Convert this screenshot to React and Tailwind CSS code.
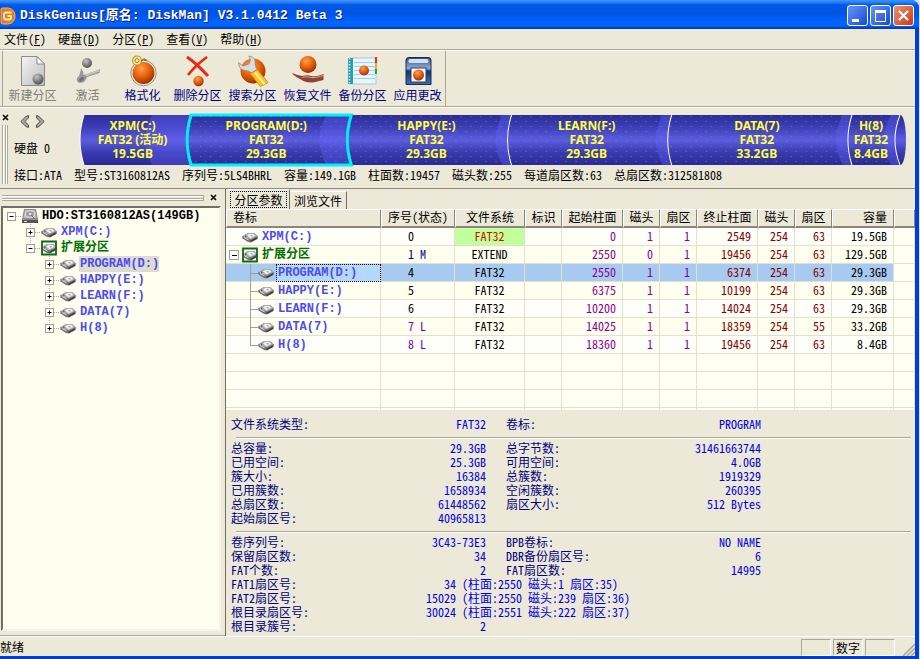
import { useState } from "react";

const menus = [
  { label: "文件", hotkey: "F" },
  { label: "硬盘", hotkey: "D" },
  { label: "分区", hotkey: "P" },
  { label: "查看", hotkey: "V" },
  { label: "帮助", hotkey: "H" },
];

const segments = [
  { name: "XPM(C:)", fs: "FAT32 (活动)", size: "19.5GB", x: 0, width: 107 },
  { name: "PROGRAM(D:)", fs: "FAT32", size: "29.3GB", x: 107, width: 160 },
  { name: "HAPPY(E:)", fs: "FAT32", size: "29.3GB", x: 267, width: 160 },
  { name: "LEARN(F:)", fs: "FAT32", size: "29.3GB", x: 427, width: 160 },
  { name: "DATA(7)", fs: "FAT32", size: "33.2GB", x: 587, width: 180 },
  { name: "H(8)", fs: "FAT32", size: "8.4GB", x: 767, width: 48 },
];

const diskInfo = [
  "接口:ATA",
  "型号:ST3160812AS",
  "序列号:5LS4BHRL",
  "容量:149.1GB",
  "柱面数:19457",
  "磁头数:255",
  "每道扇区数:63",
  "总扇区数:312581808",
];

const tree = [
  { name: "HDO:ST3160812AS(149GB)", level: 0, open: true, kind: "disk" },
  { name: "XPM(C:)", level: 1, open: false, kind: "drive" },
  { name: "扩展分区", level: 1, open: true, kind: "extend", last: true },
  { name: "PROGRAM(D:)", level: 2, open: false, kind: "drive" },
  { name: "HAPPY(E:)", level: 2, open: false, kind: "drive" },
  { name: "LEARN(F:)", level: 2, open: false, kind: "drive" },
  { name: "DATA(7)", level: 2, open: false, kind: "drive" },
  { name: "H(8)", level: 2, open: false, kind: "drive", last: true },
];

const columns = [
  { label: "卷标", col: "w-[155px]", head: "text-left pl-1.5" },
  { label: "序号(状态)", col: "w-[74px]", head: "text-center" },
  { label: "文件系统", col: "w-[70px]", head: "text-center" },
  { label: "标识", col: "w-[37px]", head: "text-center" },
  { label: "起始柱面", col: "w-[61px]", head: "text-center" },
  { label: "磁头", col: "w-[37px]", head: "text-center" },
  { label: "扇区", col: "w-[37px]", head: "text-center" },
  { label: "终止柱面", col: "w-[61px]", head: "text-center" },
  { label: "磁头", col: "w-[37px]", head: "text-center" },
  { label: "扇区", col: "w-[37px]", head: "text-center" },
  { label: "容量", col: "w-[62px]", head: "text-right pr-1.5" },
  { label: "", col: "", head: "" },
];

const rows = [
  { name: "XPM(C:)", no: "0", fs: "FAT32", start: ["0", "1", "1"], end: ["2549", "254", "63"], size: "19.5GB", active: true },
  { name: "扩展分区", no: "1 M", noColor: "text-[#000090]", fs: "EXTEND", start: ["2550", "0", "1"], end: ["19456", "254", "63"], size: "129.5GB", extend: true },
  { name: "PROGRAM(D:)", no: "4", fs: "FAT32", start: ["2550", "1", "1"], end: ["6374", "254", "63"], size: "29.3GB", child: true },
  { name: "HAPPY(E:)", no: "5", fs: "FAT32", start: ["6375", "1", "1"], end: ["10199", "254", "63"], size: "29.3GB", child: true },
  { name: "LEARN(F:)", no: "6", fs: "FAT32", start: ["10200", "1", "1"], end: ["14024", "254", "63"], size: "29.3GB", child: true },
  { name: "DATA(7)", no: "7 L", noColor: "text-[#900090]", fs: "FAT32", start: ["14025", "1", "1"], end: ["18359", "254", "55"], size: "33.2GB", child: true },
  { name: "H(8)", no: "8 L", noColor: "text-[#900090]", fs: "FAT32", start: ["18360", "1", "1"], end: ["19456", "254", "63"], size: "8.4GB", child: true, last: true },
];

const details = [
  [["文件系统类型:", "FAT32", "卷标:", "PROGRAM"]],
  [
    ["总容量:", "29.3GB", "总字节数:", "31461663744"],
    ["已用空间:", "25.3GB", "可用空间:", "4.0GB"],
    ["簇大小:", "16384", "总簇数:", "1919329"],
    ["已用簇数:", "1658934", "空闲簇数:", "260395"],
    ["总扇区数:", "61448562", "扇区大小:", "512 Bytes"],
    ["起始扇区号:", "40965813"],
  ],
  [
    ["卷序列号:", "3C43-73E3", "BPB卷标:", "NO NAME"],
    ["保留扇区数:", "34", "DBR备份扇区号:", "6"],
    ["FAT个数:", "2", "FAT扇区数:", "14995"],
  ],
];

const sectors = [
  ["FAT1扇区号:", "34", "(柱面:2550 磁头:1 扇区:35)"],
  ["FAT2扇区号:", "15029", "(柱面:2550 磁头:239 扇区:36)"],
  ["根目录扇区号:", "30024", "(柱面:2551 磁头:222 扇区:37)"],
];

/* ---------- icons ---------- */

function Logo() {
  return (
    <svg width="16" height="18" viewBox="0 0 16 18">
      <path d="M1 2 Q1 1 3 1 H8 Q15 2 15 9 Q15 16 8 17 H3 Q1 17 1 15 Z" fill="#f07818" stroke="#ffb060" />
      <path d="M11.5 5.5 H6 Q4 5.5 4 7.5 V10.5 Q4 12.5 6 12.5 H9.5 Q11 12.5 11 11 V9 H7.5" fill="none" stroke="#fff3c8" strokeWidth="1.8" />
    </svg>
  );
}

function DriveIcon({ boxed }) {
  return (
    <svg width="16" height="16" viewBox="0 0 16 16" className="shrink-0">
      {boxed && <rect x="0.500" y="1.500" width="15" height="13" fill="#fff" />}
      <path d="M0 7.500 L6 4 L12.500 4.200 L16 7.500 L15.500 10 L9 13.500 L6 13 L0.500 9.500 Z" fill="#707070" />
      <path d="M0.500 7.200 L6 4 L12.500 4.200 L15.500 7 L8.500 10.500 Z" fill="#b0b0b0" />
      <path d="M5 6.500 L8 4.800 L12 5.200 L13 7 L8.500 9.200 Z" fill="#f4f4f4" />
      <path d="M8 6.300 L10.500 6 L11 7.200 L9 7.800 Z" fill="#a8a8a8" />
      <path d="M2 8.500 L6.500 10.800" stroke="#e4e4e4" />
      <path d="M8.500 12.500 L15 9" stroke="#3a3a3a" strokeWidth="1.400" />
      <rect x="3" y="6.500" width="1.500" height="1.500" fill="#5c5c5c" />
      {boxed && <path d="M1 1.500 H15 V14.500 H1 Z" fill="none" stroke="#0c6c0c" strokeWidth="1.800" />}
    </svg>
  );
}

function DiskIcon() {
  return (
    <svg width="16" height="16" viewBox="0 0 16 16" className="shrink-0">
      <path d="M2 1 H14 L16 11 V15 H0 V11 Z" fill="#8d8d8d" />
      <path d="M3 2 H13 L14.5 10 H1.5 Z" fill="#c0c0c0" />
      <ellipse cx="8" cy="6" rx="4.5" ry="3.2" fill="#9c9c9c" stroke="#e4e4e4" />
      <ellipse cx="8" cy="6" rx="1.3" ry="1" fill="#f5f5f5" />
      <path d="M9 7 L13 11" stroke="#707070" />
      <rect x="0" y="12" width="16" height="3" fill="#555" />
      <rect x="2" y="13" width="3" height="1" fill="#ddd" />
    </svg>
  );
}

function Ball({ cx, cy, r, gray }) {
  return <circle cx={cx} cy={cy} r={r} fill={gray ? "url(#ballGray)" : "url(#ballOrange)"} />;
}

function NewIcon() {
  return (
    <>
      <path d="M4.500 1.500 H20 L27.500 9 V30.500 H4.500 Z" fill="url(#paper)" stroke="#8a8a8a" />
      <path d="M20 1.500 V9 H27.500 Z" fill="#fff" stroke="#8a8a8a" />
      <Ball cx={21} cy={24} r={5.500} gray />
    </>
  );
}

function ActivateIcon() {
  return (
    <>
      <Ball cx={15} cy={8} r={5} gray />
      <path d="M28 14 L27.500 18 L15 22 Q14 27 9 28 Q4 28 5 23 Q8 21 9 13 Q12 17 11.500 20 L14 19.500 Z" fill="#9a9a9a" />
      <path d="M6.500 25.500 Q9 28 12 24 Q12.500 22 10 22 Q7 23 6.500 25.500 Z" fill="#707070" />
      <path d="M14 20.500 L27 15.500" fill="none" stroke="#c8c8c8" strokeWidth="1.500" />
    </>
  );
}

function FormatIcon() {
  return (
    <>
      <circle cx="16.500" cy="18" r="12.700" fill="#fff2c4" stroke="#8d8d9c" />
      <Ball cx={16.5} cy={18} r={11} />
      <circle cx="10" cy="5.500" r="4.500" fill="#ffe98c" stroke="#b89828" strokeWidth="1.200" />
      <circle cx="10" cy="5.500" r="2" fill="#ece9d8" stroke="#a08030" />
      <path d="M14 6 L17 4 L20 5.500" fill="none" stroke="#907830" strokeWidth="1.500" />
    </>
  );
}

function DeleteIcon() {
  return (
    <>
      <path d="M5 2 Q14 8 26 21" fill="none" stroke="#e8280c" strokeWidth="3" />
      <path d="M25 2 Q14 10 6 20" fill="none" stroke="#e8280c" strokeWidth="2.600" />
      <Ball cx={16.5} cy={26} r={5.2} />
    </>
  );
}

function SearchIcon() {
  return (
    <>
      <Ball cx={16} cy={16} r={12.5} />
      <path d="M13 18.500 L20.500 14.500 L31 27.500 L23.500 31.500 Z" fill="#ffc020" stroke="#c88000" strokeWidth="0.800" />
      <path d="M18 17.500 L27.500 29" stroke="#fff2a0" strokeWidth="2" />
      <path d="M12 1 Q19 2 18 8.500 Q18 11 20 14.500 L14 18 Q12 15 8 15.500 Q2 14.500 1.500 7.500 L6 11 L12 9 L13.500 5 Z" fill="#dcdcdc" stroke="#8a8a8a" strokeWidth="0.800" />
    </>
  );
}

function RecoverIcon() {
  return (
    <>
      <Ball cx={16} cy={9.5} r={8.5} />
      <path d="M0.500 18 Q4 20 10 21 Q16 19.500 19 21 Q24 22 31.500 19 V25 Q26 26 21 27.500 Q13 28 9 24.500 Q4 22.500 0.500 19 Z" fill="#8e4432" />
      <path d="M10 22.500 Q15 21 19 22.500 Q25 23 31 20.500" fill="none" stroke="#d69a80" strokeWidth="1.200" />
    </>
  );
}

function BackupIcon() {
  return (
    <>
      <rect x="3" y="3" width="26" height="26" fill="#eaf6ff" stroke="#9cc8e4" />
      <path d="M7 7.500 H28 M7 11.500 H28 M7 15.500 H28 M7 19.500 H28 M7 23.500 H28" stroke="#9ed0f0" />
      <rect x="1" y="3" width="5" height="26" fill="#2c9cb4" />
      <path d="M2.500 3 V29" stroke="#d8f4ff" strokeWidth="1.500" strokeDasharray="1.500 1.500" />
      <rect x="28" y="2" width="2" height="6" fill="#d83020" />
      <rect x="28" y="8" width="2" height="6" fill="#e8b020" />
      <rect x="28" y="14" width="2" height="5" fill="#30a050" />
      <Ball cx={17} cy={15.500} r={5} />
    </>
  );
}

function ApplyIcon() {
  return (
    <>
      <path d="M4 5 Q4 2.500 7 2.500 H26 Q29 2.500 29 5 V29.500 H4 Z" fill="url(#floppy)" stroke="#1c2c50" />
      <rect x="6.500" y="4" width="20" height="4" rx="1.500" fill="#cfe0f4" />
      <rect x="9" y="13" width="15" height="14" fill="#f6f8fc" stroke="#30405c" />
      <Ball cx={16.500} cy={20} r={5.500} />
    </>
  );
}

const tools = [
  { label: "新建分区", icon: NewIcon, disabled: true },
  { label: "激活", icon: ActivateIcon, disabled: true },
  { label: "格式化", icon: FormatIcon },
  { label: "删除分区", icon: DeleteIcon },
  { label: "搜索分区", icon: SearchIcon },
  { label: "恢复文件", icon: RecoverIcon },
  { label: "备份分区", icon: BackupIcon },
  { label: "应用更改", icon: ApplyIcon },
];

function IconDefs() {
  return (
    <svg width="0" height="0" className="absolute" aria-hidden="true">
      <defs>
        <radialGradient id="ballOrange" cx="0.4" cy="0.3" r="0.8">
          <stop offset="0" stopColor="#ffa050" />
          <stop offset="0.45" stopColor="#e8640c" />
          <stop offset="0.75" stopColor="#b84008" />
          <stop offset="1" stopColor="#6c1c00" />
        </radialGradient>
        <radialGradient id="ballGray" cx="0.38" cy="0.3" r="0.75">
          <stop offset="0" stopColor="#c4c4c4" />
          <stop offset="0.5" stopColor="#888" />
          <stop offset="1" stopColor="#484848" />
        </radialGradient>
        <linearGradient id="paper" x1="0" y1="0" x2="1" y2="1">
          <stop offset="0" stopColor="#f4f4f4" />
          <stop offset="1" stopColor="#bdbdbd" />
        </linearGradient>
        <linearGradient id="floppy" x1="0" y1="0" x2="0" y2="1">
          <stop offset="0" stopColor="#35486e" />
          <stop offset="0.4" stopColor="#8cb0e0" />
          <stop offset="0.5" stopColor="#14346c" />
          <stop offset="1" stopColor="#3c70b8" />
        </linearGradient>
      </defs>
    </svg>
  );
}

/* ---------- window parts ---------- */

function TitleBar() {
  const box = "w-[21px] h-[21px] rounded-[3px] border border-white flex items-center justify-center";
  return (
    <header className="h-[29px] shrink-0 flex items-center justify-between pr-[5px] bg-[linear-gradient(#3d95ff_0,#2a82f8_2px,#0058e6_5px,#0054e3_14px,#0066ff_22px,#0062fa_26px,#0040c0_28px,#0038b0_29px)]">
      <div className="flex items-center gap-1 pt-0.5">
        <Logo />
        <h1 className="font-['Liberation_Mono','Noto_Sans_CJK_SC',monospace] text-[13px] leading-4 font-bold text-white whitespace-nowrap [text-shadow:1px_1px_0_#0a1883]">
          DiskGenius[原名: DiskMan] V3.1.0412 Beta 3
        </h1>
      </div>
      <div className="flex gap-0.5 pt-0.5">
        <button aria-label="Minimize" className={`${box} bg-linear-to-br from-[#6a94f4] to-[#1846d8]`}>
          <svg width="15" height="15"><rect x="2" y="11" width="7" height="3" fill="#fff" /></svg>
        </button>
        <button aria-label="Maximize" className={`${box} bg-linear-to-br from-[#6a94f4] to-[#1846d8]`}>
          <svg width="15" height="15"><path d="M2.500 3 V13.500 H12.500 V3" fill="none" stroke="#fff" /><rect x="2" y="2" width="11" height="3" fill="#fff" /></svg>
        </button>
        <button aria-label="Close" className={`${box} bg-linear-to-br from-[#f09070] to-[#c83408]`}>
          <svg width="15" height="15"><path d="M3 3 L12 12 M12 3 L3 12" stroke="#fff" strokeWidth="2.200" /></svg>
        </button>
      </div>
    </header>
  );
}

function MenuBar() {
  return (
    <nav className="h-[21px] shrink-0 flex items-center gap-3 pl-1 border-b border-[#aca899]">
      {menus.map((m) => (
        <button key={m.label} className="leading-4 whitespace-nowrap">
          {m.label}(<u>{m.hotkey}</u>)
        </button>
      ))}
    </nav>
  );
}

function ToolBar() {
  return (
    <div className="h-[57px] shrink-0 flex pl-0.5 border-t border-t-white border-b border-b-[#aca899]">
      <div className="flex border-l border-l-[#aca899] border-r border-r-[#aca899] pl-0.5">
        {tools.map(({ label, icon: Icon, disabled }) => (
          <button key={label} disabled={disabled} className="w-[55px] flex flex-col items-center pt-1">
            <svg width="32" height="32" viewBox="0 0 32 32"><Icon /></svg>
            <span className={`leading-4 whitespace-nowrap ${disabled ? "text-[#808078]" : "text-[#000080]"}`}>{label}</span>
          </button>
        ))}
      </div>
    </div>
  );
}

function CloseX({ label }) {
  return (
    <button aria-label={label} className="block">
      <svg width="7" height="7" viewBox="0 0 7 7"><path d="M1 1 L6 6 M6 1 L1 6" stroke="#000" strokeWidth="1.600" /></svg>
    </button>
  );
}

// left edge of a segment, bulging to the left
const arc = (x) => `M${x + 5} 2 Q${x - 3} 27 ${x + 5} 52`;

function Cylinder({ selected, onSelect }) {
  const sel = segments[selected];
  const right = sel.x + sel.width;
  return (
    <div className="relative flex-1 h-[54px]">
      <svg className="absolute inset-0 w-full h-full" viewBox="0 0 827 54" preserveAspectRatio="none">
        <defs>
          <linearGradient id="tube" x1="0" y1="0" x2="0" y2="1">
            <stop offset="0" stopColor="#2c2c98" />
            <stop offset="0.25" stopColor="#3e3eb8" />
            <stop offset="0.5" stopColor="#5c5ce0" />
            <stop offset="0.75" stopColor="#3a3ab0" />
            <stop offset="1" stopColor="#2a2a94" />
          </linearGradient>
          <pattern id="dots" width="10" height="10" patternUnits="userSpaceOnUse">
            <rect x="1" y="3" width="1" height="1" fill="#30a070" />
            <rect x="6" y="8" width="1" height="1" fill="#30a070" />
          </pattern>
        </defs>
        <path d="M5 2 Q-3 27 5 52 H821 V2 Z" fill="url(#tube)" />
        {/* lighter sheen at the right end of each segment */}
        {segments.map((s, i) => {
          const end = s.x + s.width;
          const w = i === 0 ? 40 : i === 1 ? 26 : 10;
          return (
            <path
              key={s.name}
              d={`M${end - w + 6} 2 Q${end - w - 8} 27 ${end - w + 6} 52 H${end + 5} Q${end - 3} 27 ${end + 5} 2 Z`}
              fill="#6464ff"
              opacity="0.35"
            />
          );
        })}
        <path d="M112 2 Q104 27 112 52 H821 V2 Z" fill="url(#dots)" />
        {segments.map((s) => (
          <path key={s.name} d={arc(s.x)} fill="none" stroke="#fff" />
        ))}
        <ellipse cx="820.5" cy="27" rx="5.500" ry="25" fill="url(#tube)" />
        <path d="M820 2 Q810 27 820 52" fill="none" stroke="#fff" />
        <path d={`M${sel.x + 5} 2 Q${sel.x - 3} 27 ${sel.x + 5} 52 H${right + 5} Q${right - 3} 27 ${right + 5} 2 Z`} fill="none" stroke="#00f0ff" strokeWidth="3" />
      </svg>
      <div className="relative flex h-full pr-3">
        {segments.map((s, i) => (
          <button
            key={s.name}
            onClick={() => onSelect(i)}
            style={{ flexGrow: s.width }}
            className="basis-0 min-w-0 flex flex-col items-center justify-center font-['Noto_Sans','Noto_Sans_CJK_SC',sans-serif] text-[12px] leading-[14px] font-bold text-[#ffff40] whitespace-nowrap"
          >
            <span>{s.name}</span>
            <span>{s.fs}</span>
            <span>{s.size}</span>
          </button>
        ))}
      </div>
    </div>
  );
}

function DiskPanel({ selected, onSelect }) {
  return (
    <section className="h-[82px] shrink-0 flex border-t border-t-white border-b border-b-[#8a877a]">
      <div className="w-[14px] flex flex-col items-start pl-0.5 pt-1.5 pb-1">
        <CloseX label="Close disk panel" />
        <div className="flex-1 w-1.5 mt-1 border-x border-[#aca899] bg-[linear-gradient(90deg,#fff_1px,#ece9d8_1px,#ece9d8_2px,#aca899_2px,#aca899_3px,#fff_3px)]" />
      </div>
      <div className="flex-1 min-w-0 flex flex-col">
        <div className="flex pt-[5px] pr-2">
          <div className="w-[65px] shrink-0 flex flex-col gap-3 pt-0.5 whitespace-nowrap">
            <div className="flex gap-1 pl-1.5">
              <button aria-label="Previous disk"><svg width="11" height="13" viewBox="0 0 11 13"><path d="M8.500 0.500 L6 1.500 L0.800 6.500 L6 11.500 L8.500 12.500 V10 L4.800 6.500 L8.500 3 Z" fill="#a8a8a0" stroke="#505048" /></svg></button>
              <button aria-label="Next disk"><svg width="11" height="13" viewBox="0 0 11 13"><path d="M1.500 0.500 L4 1.500 L9.200 6.500 L4 11.500 L1.500 12.500 V10 L5.200 6.500 L1.500 3 Z" fill="#a8a8a0" stroke="#505048" /></svg></button>
            </div>
            <span className="leading-4">硬盘 0</span>
          </div>
          <Cylinder selected={selected} onSelect={onSelect} />
        </div>
        <p className="flex gap-3 leading-4 whitespace-nowrap">
          {diskInfo.map((t) => <span key={t}>{t}</span>)}
        </p>
      </div>
    </section>
  );
}

function TreeGuide({ node }) {
  const x = 8 + 19 * node.level;
  return (
    <svg width={x + 11} height="16" className="shrink-0">
      <g stroke="#a8a898" strokeDasharray="1 1">
        {node.level > 0 && <path d={`M${x + 0.5} 0 V${node.last ? 8 : 16}`} />}
        {node.level === 0 && <path d="M27.500 15 V16" />}
        <path d={`M${x + 5} 8.500 H${x + 11}`} />
      </g>
      <rect x={x - 3.5} y="4.500" width="8" height="8" fill="#fff" stroke="#a09c88" />
      <path d={`M${x - 1.5} 8.500 H${x + 2.5}`} stroke="#000" />
      {!node.open && <path d={`M${x + 0.5} 6.500 V10.500`} stroke="#000" />}
    </svg>
  );
}

function nodeColor(kind) {
  if (kind === "disk") return "text-black";
  if (kind === "extend") return "text-[#007000]";
  return "text-[#4c4cf0]";
}

function TreePane({ current }) {
  return (
    <aside className="w-[225px] shrink-0 flex flex-col border-b border-[#aca899]">
      <div className="h-[17px] flex items-center gap-1.5 pl-0.5 pr-2">
        <div className="flex-1 h-1.5 border-y border-r border-[#aca899] bg-[linear-gradient(#fff_1px,#ece9d8_1px,#ece9d8_2px,#aca899_2px,#aca899_3px,#fff_3px)]" />
        <CloseX label="Close tree" />
      </div>
      <ul className="flex-1 ml-px mr-1 mb-1 border-2 border-t-[#716f64] border-l-[#716f64] border-r-[#f6f4ea] border-b-[#f6f4ea] bg-[#fffff0]">
        {tree.map((n) => (
          <li key={n.name} className="h-4 flex items-center">
            <TreeGuide node={n} />
            {n.kind === "disk" ? <DiskIcon /> : <DriveIcon boxed={n.kind === "extend"} />}
            <span className={`ml-[3px] pl-px leading-4 font-bold whitespace-nowrap font-['Liberation_Mono','Noto_Sans_CJK_SC',monospace] ${nodeColor(n.kind)} ${n.name === current ? "bg-[#dedbd0]" : ""}`}>
              {n.name}
            </span>
          </li>
        ))}
      </ul>
    </aside>
  );
}

function RowGuide({ row }) {
  if (!row.child) {
    return (
      <svg width="16" height="17" className="shrink-0">
        {row.extend && (
          <g>
            <rect x="3.500" y="4.500" width="9" height="9" fill="#fff" stroke="#a0a0a0" />
            <path d="M6 9.500 H11" stroke="#000" />
          </g>
        )}
      </svg>
    );
  }
  return (
    <svg width="32" height="18" className="shrink-0">
      <path d={`M24.500 0 V${row.last ? 9 : 18} M24 9.500 H32`} fill="none" stroke="#a0a0a0" />
    </svg>
  );
}

function PartitionTable({ selected, onSelect }) {
  const cell = "h-[18px] p-0 align-top border-r border-b border-[#e4e0d0]";
  return (
    <div className="flex-1 min-h-0 overflow-hidden bg-[#fffff4]">
      <table className="w-full table-fixed border-separate border-spacing-0 leading-4 whitespace-nowrap">
        <colgroup>
          {columns.map((c, i) => <col key={i} className={c.col} />)}
        </colgroup>
        <thead>
          <tr>
            {columns.map((c, i) => (
              <th key={i} className={`h-[19px] p-0 align-top leading-[14px] font-normal bg-[#ece9d8] border-t border-t-white border-l border-l-white border-r border-r-[#8a877a] border-b-2 border-b-[#8a877a] ${c.head}`}>
                {c.label}
              </th>
            ))}
          </tr>
        </thead>
        <tbody>
          {rows.map((r, i) => {
            const on = i === selected;
            return (
              <tr key={r.name} onClick={() => onSelect(i)} className={on ? "bg-[#a6caf0]" : i % 2 ? "bg-[#fffff0]" : "bg-[#fffffa]"}>
                <td className={cell}>
                  <div className="h-[17px] flex items-center">
                    <RowGuide row={r} />
                    <DriveIcon boxed={r.extend} />
                    <span className={`ml-[3px] pl-px font-bold font-['Liberation_Mono','Noto_Sans_CJK_SC',monospace] ${r.extend ? "text-[#007000]" : "text-[#4c4cf0]"} ${on ? "flex-1 bg-[#b4d8ff] outline-1 outline-dotted outline-black" : ""}`}>
                      {r.name}
                    </span>
                  </div>
                </td>
                <td className={`${cell} pl-[27px] ${r.noColor || ""}`}>{r.no}</td>
                <td className={`${cell} text-center ${r.active ? "bg-[#c0ff9c] text-[#d01000]" : ""}`}>{r.fs}</td>
                <td className={cell}></td>
                {r.start.map((v, k) => <td key={k} className={`${cell} text-right pr-1.5 text-[#900090]`}>{v}</td>)}
                {r.end.map((v, k) => <td key={k} className={`${cell} text-right pr-1.5 text-[#880000]`}>{v}</td>)}
                <td className={`${cell} text-right pr-1.5`}>{r.size}</td>
                <td className={`${cell} bg-[#fffff4]`}></td>
              </tr>
            );
          })}
          {[0, 1, 2, 3, 4, 5, 6, 7, 8, 9].map((n) => (
            <tr key={n} className="bg-[#fffff4]">
              {columns.map((_, k) => <td key={k} className={cell}></td>)}
            </tr>
          ))}
        </tbody>
      </table>
    </div>
  );
}

function DetailRow({ item: [label, value, label2, value2] }) {
  return (
    <div className="flex">
      <dt className="w-[108px] text-[#000080]">{label}</dt>
      <dd className="w-[147px] text-right">{value}</dd>
      {label2 && <dt className="w-[120px] ml-5 text-[#000080]">{label2}</dt>}
      {value2 && <dd className="w-[135px] text-right">{value2}</dd>}
    </div>
  );
}

function Details() {
  const rule = "h-0.5 ml-[5px] mr-1 mt-1.5 mb-0.5 border-t border-t-[#aca899] border-b border-b-white";
  return (
    <dl className="shrink-0 pl-[5px] pt-[7px] pb-[3px] leading-[14px] whitespace-nowrap text-[#0000e0]">
      {details[0].map((d) => <DetailRow key={d[0]} item={d} />)}
      <div className={rule} />
      {details[1].map((d) => <DetailRow key={d[0]} item={d} />)}
      <div className={rule} />
      {details[2].map((d) => <DetailRow key={d[0]} item={d} />)}
      {sectors.map(([label, no, chs]) => (
        <div key={label} className="flex">
          <dt className="w-[108px] text-[#000080]">{label}</dt>
          <dd className="w-[117px] text-right">{no}</dd>
          <dd className="ml-1.5">{chs}</dd>
        </div>
      ))}
      <DetailRow item={["根目录簇号:", "2"]} />
    </dl>
  );
}

function StatusBar() {
  const box = "w-[30px] h-[17px] border border-t-[#aca899] border-l-[#aca899] border-r-white border-b-white leading-4";
  return (
    <footer className="h-5 shrink-0 flex items-end justify-between border-t border-white">
      <span className="leading-[19px]">就绪</span>
      <div className="flex items-end gap-0.5">
        <div className={box} />
        <div className={`${box} text-center`}>数字</div>
        <div className={box} />
        <svg width="18" height="16" viewBox="0 0 18 16">
          <path d="M6 16 L18 4 M10 16 L18 8 M14 16 L18 12" stroke="#aca899" strokeWidth="1.600" />
        </svg>
      </div>
    </footer>
  );
}

export default function App() {
  const [selected, setSelected] = useState(1);
  const [tab, setTab] = useState(0);

  // table rows hold the extended partition as well, the cylinder does not
  const rowIndex = selected === 0 ? 0 : selected + 1;
  const handleRow = (i) => {
    if (i !== 1) setSelected(i === 0 ? 0 : i - 1);
  };

  return (
    <div className="h-screen w-full pr-px bg-[#d8e2f4]">
      <IconDefs />
      <div className="h-full flex flex-col overflow-hidden rounded-tr-lg bg-[#0040d0] text-[12px] text-black font-['Noto_Sans_Mono_CJK_SC','Noto_Sans_CJK_SC',monospace]">
        <TitleBar />
        <main className="flex-1 min-h-0 flex flex-col mr-1 mb-[3px] bg-[#ece9d8]">
          <MenuBar />
          <ToolBar />
          <DiskPanel selected={selected} onSelect={setSelected} />
          <div className="flex-1 min-h-0 flex">
            <TreePane current={segments[selected].name} />
            <section className="flex-1 min-w-0 flex flex-col border-l border-[#716f64]">
              <div className="h-5 shrink-0 flex items-end pl-0.5" role="tablist">
                {["分区参数", "浏览文件"].map((t, i) => (
                  <button
                    key={t}
                    role="tab"
                    aria-selected={tab === i}
                    onClick={() => setTab(i)}
                    className={`border-r border-r-[#716f64] border-t border-t-white px-0.5 ${tab === i ? "h-5 w-[62px]" : "h-[18px] w-[57px]"}`}
                  >
                    <span className={`block leading-[15px] ${tab === i ? "border border-dotted border-black" : ""}`}>{t}</span>
                  </button>
                ))}
              </div>
              <PartitionTable selected={rowIndex} onSelect={handleRow} />
              <Details />
            </section>
          </div>
          <StatusBar />
        </main>
      </div>
    </div>
  );
}
